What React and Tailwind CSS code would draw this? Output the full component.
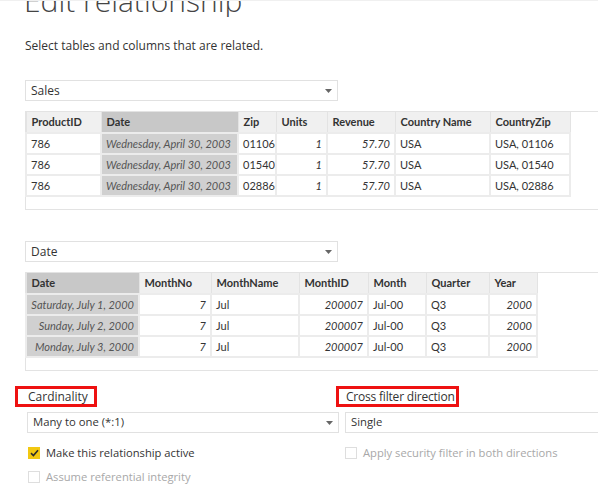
import React from "react";

const ui = { fontFamily: '"Open Sans", "Noto Sans", sans-serif' };
const grid = { fontFamily: 'Lato, "Liberation Sans", sans-serif' };

const sales = {
  cols: [
    { name: "ProductID", w: 75 },
    { name: "Date", w: 137, key: true, align: "left" },
    { name: "Zip", w: 38 },
    { name: "Units", w: 51, num: true },
    { name: "Revenue", w: 68, num: true },
    { name: "Country Name", w: 95 },
    { name: "CountryZip", w: 80 },
  ],
  rows: [
    ["786", "Wednesday, April 30, 2003", "01106", "1", "57.70", "USA", "USA, 01106"],
    ["786", "Wednesday, April 30, 2003", "01540", "1", "57.70", "USA", "USA, 01540"],
    ["786", "Wednesday, April 30, 2003", "02886", "1", "57.70", "USA", "USA, 02886"],
  ],
};

const dates = {
  cols: [
    { name: "Date", w: 113, key: true, align: "right" },
    { name: "MonthNo", w: 72, num: true },
    { name: "MonthName", w: 88 },
    { name: "MonthID", w: 69, num: true },
    { name: "Month", w: 58 },
    { name: "Quarter", w: 63 },
    { name: "Year", w: 48, num: true },
  ],
  rows: [
    ["Saturday, July 1, 2000", "7", "Jul", "200007", "Jul-00", "Q3", "2000"],
    ["Sunday, July 2, 2000", "7", "Jul", "200007", "Jul-00", "Q3", "2000"],
    ["Monday, July 3, 2000", "7", "Jul", "200007", "Jul-00", "Q3", "2000"],
  ],
};

const Caret = () => (
  <svg width="7" height="4" viewBox="0 0 7 4" className="mr-[5px]">
    <path d="M0 0h7L3.5 4z" fill="#666" />
  </svg>
);

const Dropdown = ({ label, width, caret = true, size = "text-[12px]" }) => (
  <div
    className={`h-[21px] border border-[#e1e1e1] flex items-center justify-between pl-[5px] text-[#333] bg-white ${size}`}
    style={{ width }}
  >
    <span>{label}</span>
    {caret && <Caret />}
  </div>
);

const Preview = ({ data }) => {
  const total = data.cols.reduce((s, c) => s + c.w, 0);
  return (
    <div className="ml-[25px] mt-[10px] h-[99px] w-[600px] border border-[#e3e3e3]" style={grid}>
      <table
        className="table-fixed border-collapse text-[11px] leading-none -mt-px -ml-px"
        style={{ width: total + 1 }}
      >
        <colgroup>
          {data.cols.map((c) => (
            <col key={c.name} style={{ width: c.w }} />
          ))}
        </colgroup>
        <thead>
          <tr className="h-[21px]">
            {data.cols.map((c) => (
              <th
                key={c.name}
                className={`border border-[#e3e3e3] px-[5px] text-left font-bold text-[#333] whitespace-nowrap ${
                  c.key ? "bg-[#c8c8c8]" : "bg-[#f0f0f0]"
                }`}
              >
                {c.name}
              </th>
            ))}
          </tr>
        </thead>
        <tbody>
          {data.rows.map((r, i) => (
            <tr key={i} className="h-[21px]">
              {r.map((v, j) => {
                const c = data.cols[j];
                let cls = "text-[#333]";
                if (c.key)
                  cls = `bg-[#d0d0d0] italic text-[#555] ${c.align === "right" ? "text-right" : ""}`;
                else if (c.num) cls = "italic text-right text-[#333]";
                return (
                  <td
                    key={j}
                    className={`border-[2px] border-[#ececec] px-[4px] whitespace-nowrap overflow-hidden ${cls}`}
                  >
                    {v}
                  </td>
                );
              })}
            </tr>
          ))}
        </tbody>
      </table>
    </div>
  );
};

const Check = ({ checked, disabled, label }) => (
  <div className="flex items-center h-[14px]">
    <div
      className={`w-[12px] h-[12px] flex items-center justify-center ${
        checked ? "bg-[#f2c811]" : "border border-[#dedede] bg-white"
      }`}
    >
      {checked && (
        <svg width="9" height="8" viewBox="0 0 9 8">
          <path d="M1 4.2l2.4 2.3L8 1.2" stroke="#2b2b2b" strokeWidth="1.6" fill="none" />
        </svg>
      )}
    </div>
    <span
      className={`ml-[6px] text-[11.2px] whitespace-nowrap ${disabled ? "text-[#a8a8a8]" : "text-[#333]"}`}
    >
      {label}
    </span>
  </div>
);

export default function App() {
  return (
    <div className="w-[598px] h-[495px] overflow-hidden bg-white border-t border-[#f0f0f0]" style={ui}>
      <div className="h-[16px] overflow-hidden">
        <div className="-mt-[15px] ml-[24px] text-[30px] leading-[30px] font-light text-[#444]">
          Edit relationship
        </div>
      </div>
      <div className="mt-[20px] ml-[25px] text-[12px] leading-[18px] text-[#333]">
        Select tables and columns that are related.
      </div>

      <div className="mt-[25px] ml-[25px]">
        <Dropdown label="Sales" width={313} />
      </div>
      <Preview data={sales} />

      <div className="mt-[31px] ml-[25px]">
        <Dropdown label="Date" width={313} />
      </div>
      <Preview data={dates} />

      <div className="flex mt-[15px] ml-[15px]">
        <div className="w-[321px] shrink-0">
          <div className="w-[82px] h-[21px] border-[3px] border-[#ee1111] pl-[10px] text-[12px] leading-[15px] text-[#333] whitespace-nowrap">
            Cardinality
          </div>
          <div className="mt-[5px] ml-[12px]">
            <Dropdown label="Many to one (*:1)" width={312} size="text-[11.3px]" />
          </div>
          <div className="mt-[13px] ml-[13px] flex flex-col gap-[10px]">
            <Check checked label="Make this relationship active" />
            <Check disabled label="Assume referential integrity" />
          </div>
        </div>
        <div className="shrink-0">
          <div className="w-[123px] h-[21px] border-[3px] border-[#ee1111] pl-[7px] text-[12px] leading-[15px] text-[#333] whitespace-nowrap tracking-[-0.2px]">
            Cross filter direction
          </div>
          <div className="mt-[5px] ml-[9px]">
            <Dropdown label="Single" width={300} caret={false} size="text-[11.3px]" />
          </div>
          <div className="mt-[13px] ml-[9px]">
            <Check disabled label="Apply security filter in both directions" />
          </div>
        </div>
      </div>
    </div>
  );
}
